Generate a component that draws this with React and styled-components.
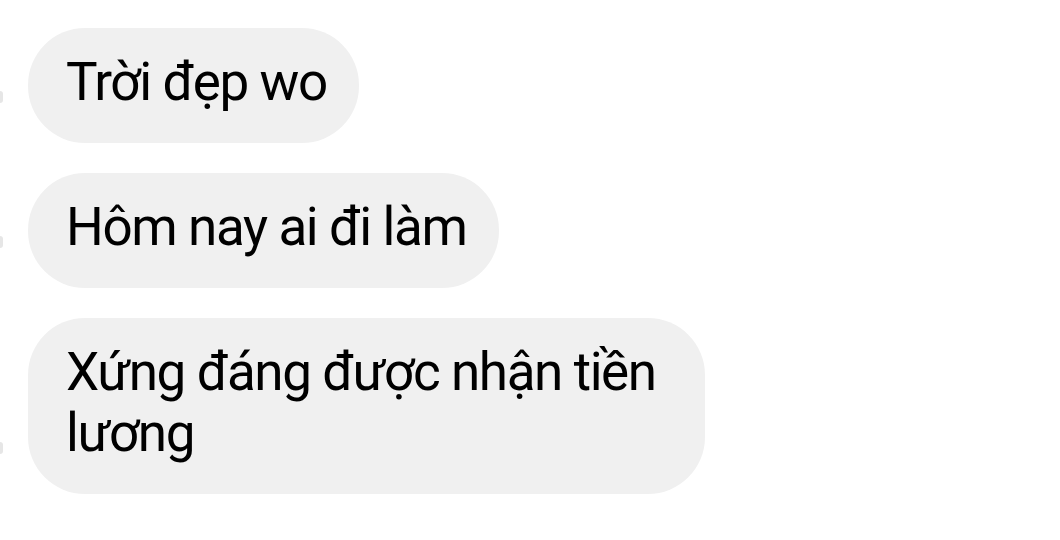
import React from "react";
import styled, { createGlobalStyle } from "styled-components";

const Global = createGlobalStyle`
  html, body {
    margin: 0;
    padding: 0;
    background: #ffffff;
  }
  body {
    font-family: Roboto, "Noto Sans", "Liberation Sans", sans-serif;
    -webkit-font-smoothing: antialiased;
  }
`;

const Thread = styled.div`
  display: flex;
  flex-direction: column;
  align-items: flex-start;
  gap: 30px;
  padding-top: 28px;
  width: 1060px;
  height: 540px;
  box-sizing: border-box;
  overflow: hidden;
`;

const Row = styled.div`
  display: flex;
  align-items: flex-end;
  gap: 25px;
`;

// sliver of the avatar that peeks in from the left edge
const Peek = styled.div`
  width: 3px;
  height: 12px;
  margin-bottom: 40px;
  border-radius: 0 3px 3px 0;
  background: #e6e6e6;
`;

const Bubble = styled.div`
  box-sizing: border-box;
  max-width: ${p => p.max || "900px"};
  padding: 24px 32px 30px 38px;
  background: #f0f0f0;
  border-radius: 57px;
  color: #000;
  font-size: 53px;
  line-height: 61px;
  letter-spacing: -1.4px;
`;

const messages = [
  { id: 1, text: "Trời đẹp wo" },
  { id: 2, text: "Hôm nay ai đi làm" },
  { id: 3, text: "Xứng đáng được nhận tiền lương", max: "677px" }
];

export default function App() {
  return (
    <>
      <Global />
      <Thread>
        {messages.map(m => (
          <Row key={m.id}>
            <Peek />
            <Bubble max={m.max}>{m.text}</Bubble>
          </Row>
        ))}
      </Thread>
    </>
  );
}
